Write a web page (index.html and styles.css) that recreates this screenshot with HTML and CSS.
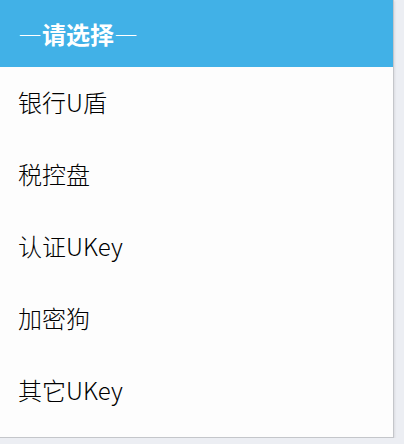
FILE: index.html
```html
<!DOCTYPE html>
<html lang="zh-CN">
<head>
<meta charset="utf-8">
<link rel="stylesheet" href="styles.css">
</head>
<body>
<div class="panel">
  <div class="header">—请选择—</div>
  <ul class="options">
    <li class="option">银行U盾</li>
    <li class="option">税控盘</li>
    <li class="option">认证UKey</li>
    <li class="option">加密狗</li>
    <li class="option">其它UKey</li>
  </ul>
</div>
</body>
</html>
```
FILE: styles.css
```css
html, body {
  margin: 0;
  padding: 0;
  background: #eceef3;
  font-family: "Noto Sans CJK SC", "Noto Sans", sans-serif;
}
.panel {
  width: 394px;
  height: 438px;
  box-sizing: border-box;
  background: #fdfdfd;
  border-right: 1px solid #c4c6ca;
  border-bottom: 1px solid #c4c6ca;
  box-shadow: 1px 1px 2px rgba(0,0,0,0.08);
}
.header {
  height: 67px;
  background: #41b1e7;
  color: #ffffff;
  font-size: 24px;
  font-weight: bold;
  line-height: 67px;
  padding-left: 18px;
  letter-spacing: 0;
}
.options {
  list-style: none;
  margin: 0;
  padding: 0;
}
.option {
  height: 72px;
  line-height: 70px;
  padding-left: 18px;
  font-size: 24px;
  font-weight: 300;
  color: #000000;
}
```
